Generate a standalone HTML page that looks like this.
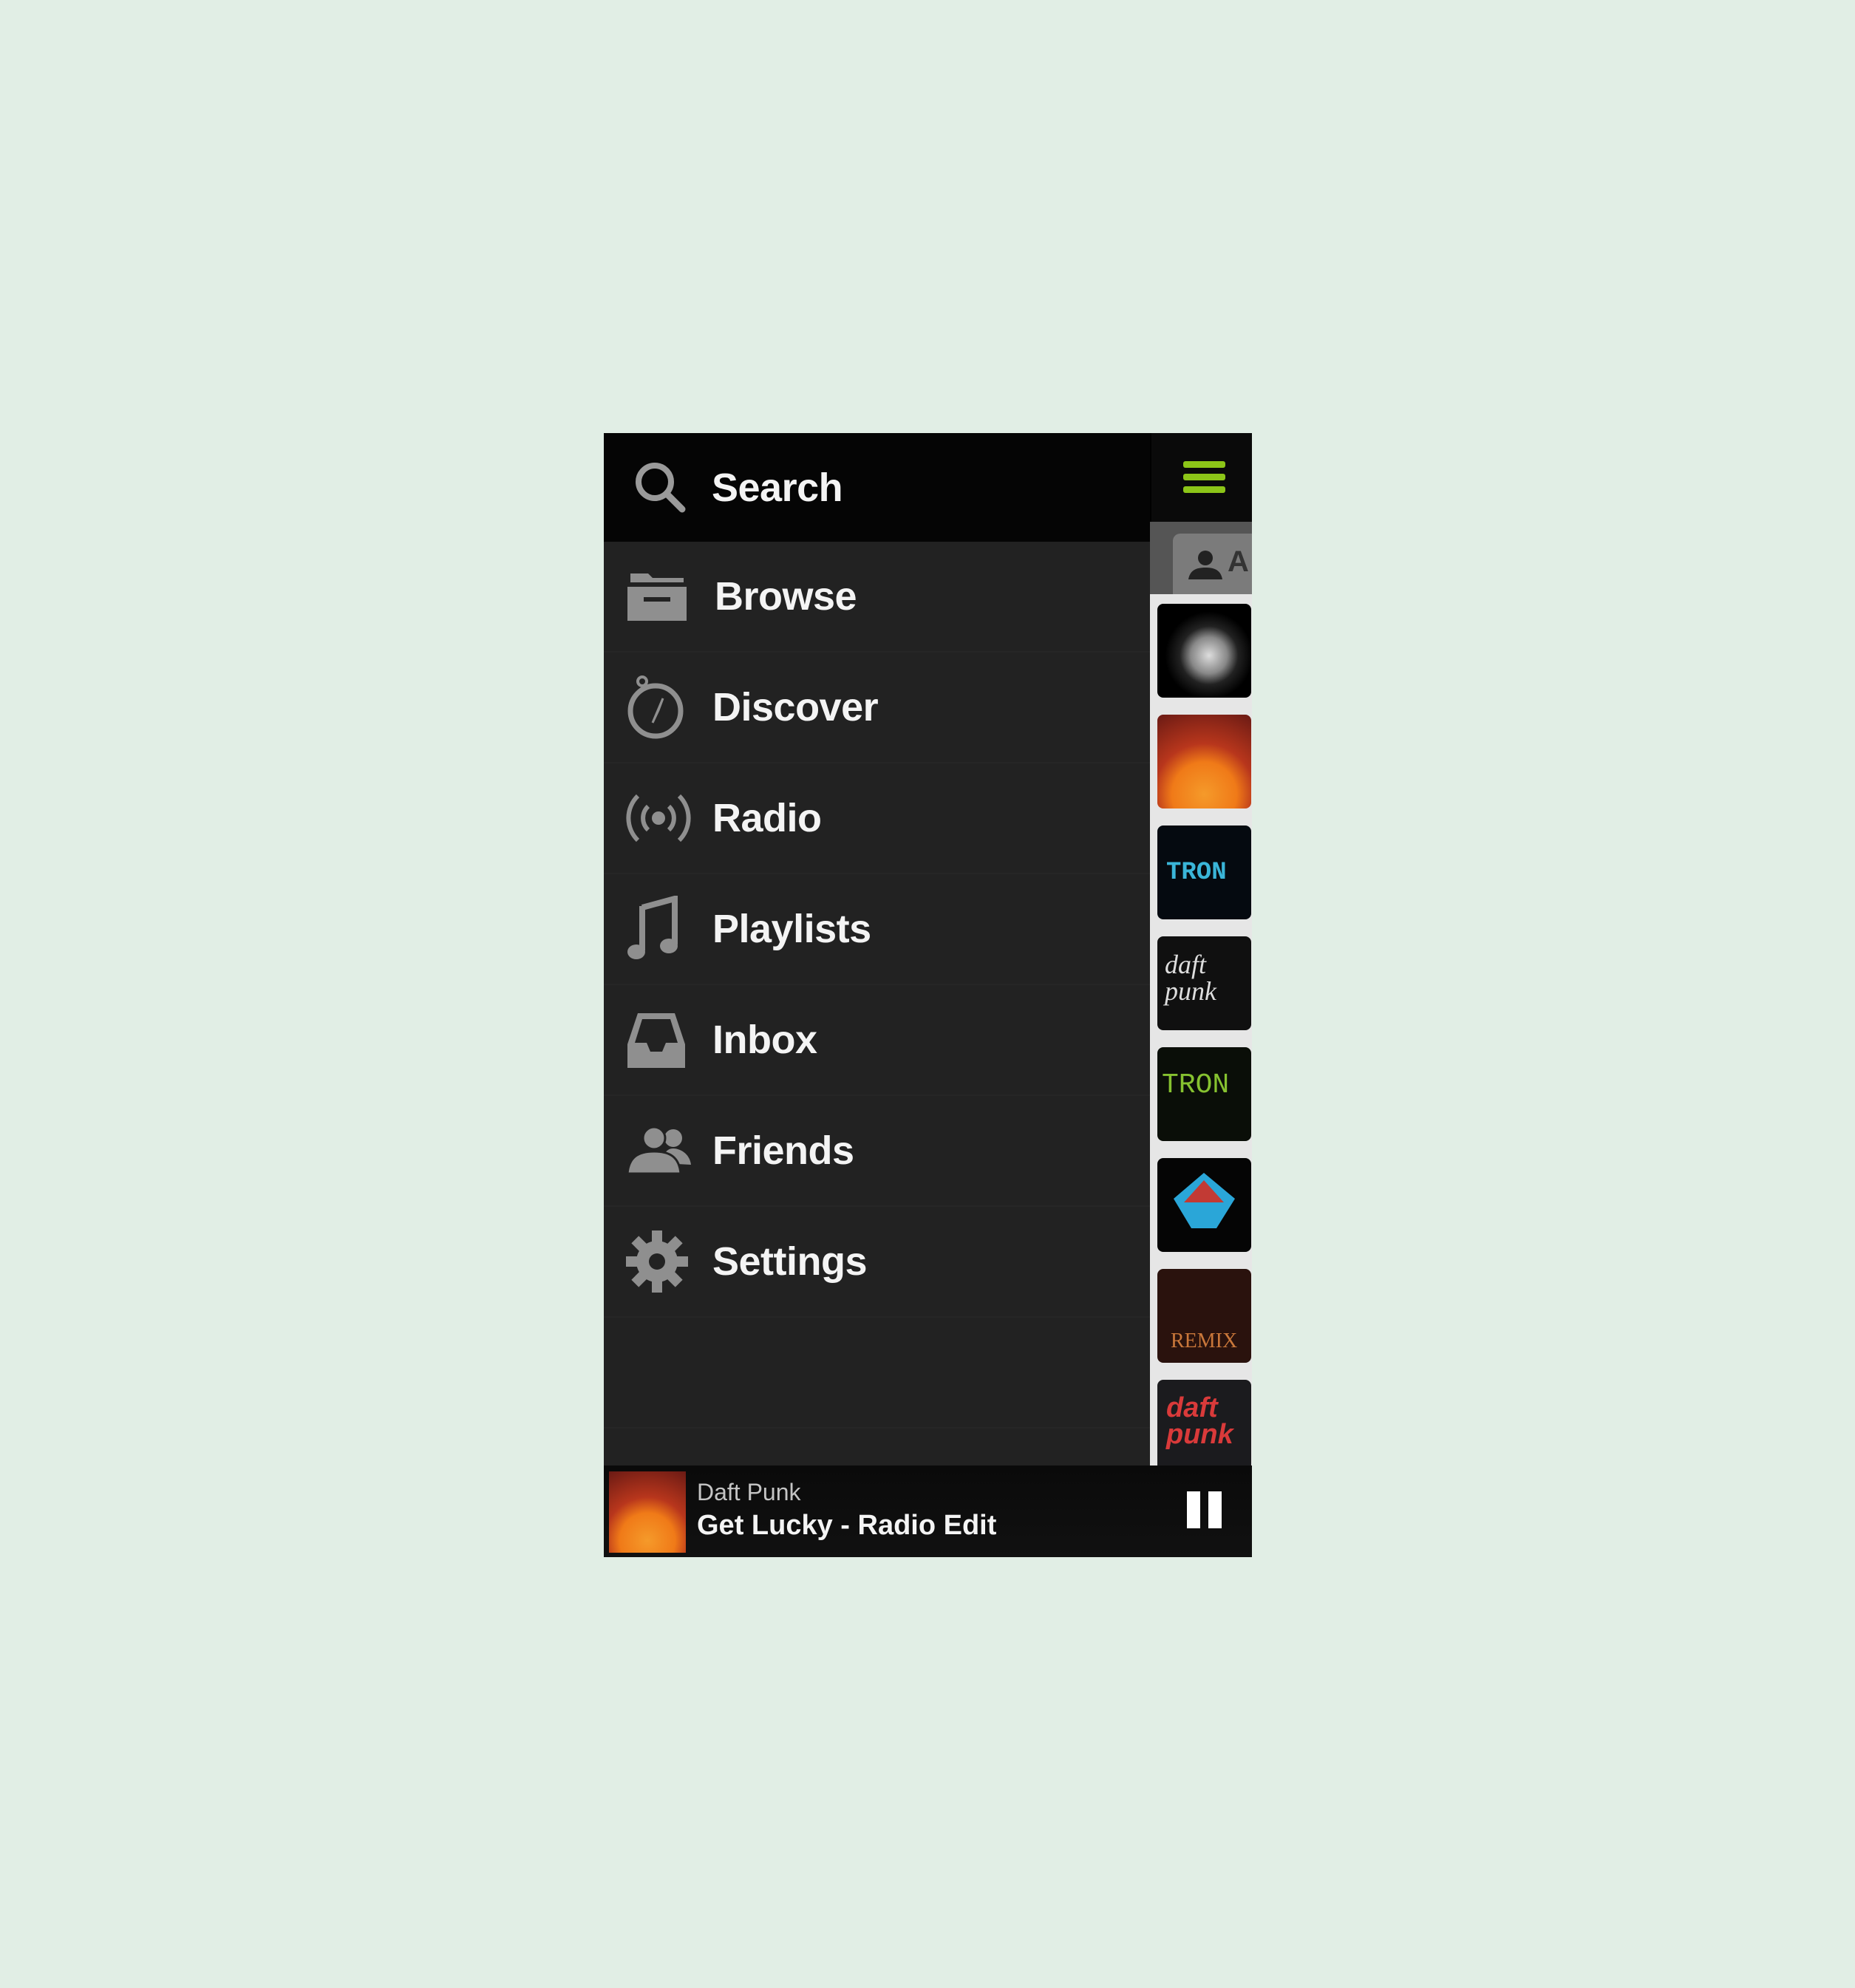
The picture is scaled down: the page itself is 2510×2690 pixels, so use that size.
<!DOCTYPE html>
<html><head><meta charset="utf-8"><style>
*{margin:0;padding:0;box-sizing:border-box}
body{width:2510px;height:2690px;background:#e1eee5;position:relative;overflow:hidden;font-family:"Liberation Sans",Arial,sans-serif}
.abs{position:absolute}
#phone{left:817px;top:586px;width:877px;height:1521px;background:#222;overflow:hidden}
.row{position:absolute;left:0;width:739px;height:150px;border-bottom:2px solid #262626}
.lbl{position:absolute;left:147px;top:50%;transform:translateY(-50%);color:#f4f4f4;font-size:54px;font-weight:bold;letter-spacing:-0.5px}
.ic{position:absolute;left:30px;top:50%;transform:translateY(-50%)}
.thumb{position:absolute;left:10px;width:127px;height:127px;border-radius:8px;overflow:hidden}
</style></head><body>
<div id="phone" class="abs">
  <!-- search bar -->
  <div class="abs" style="left:0;top:0;width:739px;height:147px;background:#050505">
    <svg class="abs" style="left:38px;top:35px" width="76" height="76" viewBox="0 0 76 76"><circle cx="31" cy="31" r="22" fill="none" stroke="#9a9a9a" stroke-width="8"/><line x1="47" y1="47" x2="68" y2="68" stroke="#9a9a9a" stroke-width="9" stroke-linecap="round"/></svg>
    <div class="lbl" style="left:146px">Search</div>
  </div>
  <!-- rows -->
  <div class="row" style="top:147px"><svg class="ic" width="84" height="70" viewBox="0 0 84 70"><path d="M6 4h24l6 6h42v6H6z" fill="#8f8f8f"/><path d="M2 22h80v46H2z" fill="#8f8f8f"/><rect x="24" y="36" width="36" height="6" fill="#222"/></svg><div class="lbl" style="left:150px">Browse</div></div>
  <div class="row" style="top:297px"><svg class="ic" width="80" height="90" viewBox="0 0 80 90"><circle cx="40" cy="50" r="34" fill="none" stroke="#8f8f8f" stroke-width="7"/><circle cx="22" cy="10" r="6" fill="none" stroke="#8f8f8f" stroke-width="4"/><path d="M50 33L36 66 44 49z" fill="#8f8f8f"/><path d="M50 33L44 49 36 66z" stroke="#8f8f8f" stroke-width="3"/></svg><div class="lbl">Discover</div></div>
  <div class="row" style="top:447px"><svg class="ic" width="88" height="76" viewBox="0 0 88 76"><circle cx="44" cy="38" r="9" fill="#8f8f8f"/><path d="M30 22a22 22 0 0 0 0 32M58 22a22 22 0 0 1 0 32" fill="none" stroke="#8f8f8f" stroke-width="6"/><path d="M16 8a42 42 0 0 0 0 60M72 8a42 42 0 0 1 0 60" fill="none" stroke="#8f8f8f" stroke-width="6"/></svg><div class="lbl">Radio</div></div>
  <div class="row" style="top:597px"><svg class="ic" width="72" height="90" viewBox="0 0 72 90"><path d="M22 16L66 4v62" fill="none" stroke="#8f8f8f" stroke-width="8"/><line x1="22" y1="14" x2="22" y2="74" stroke="#8f8f8f" stroke-width="8"/><ellipse cx="14" cy="76" rx="12" ry="10" fill="#8f8f8f"/><ellipse cx="58" cy="68" rx="12" ry="10" fill="#8f8f8f"/></svg><div class="lbl">Playlists</div></div>
  <div class="row" style="top:747px"><svg class="ic" width="82" height="80" viewBox="0 0 82 80"><path d="M16 4h50l14 42v32H2V46z" fill="#8f8f8f"/><path d="M22 12h38l10 32H54l-5 12H33l-5-12H12z" fill="#222"/></svg><div class="lbl">Inbox</div></div>
  <div class="row" style="top:897px"><svg class="ic" width="90" height="70" viewBox="0 0 90 70"><circle cx="64" cy="18" r="12" fill="#8f8f8f"/><path d="M50 52c0-14 6-20 14-20s22 6 24 22z" fill="#8f8f8f"/><circle cx="38" cy="18" r="15" fill="#8f8f8f" stroke="#222" stroke-width="3"/><path d="M2 66c2-22 14-30 36-30s34 8 36 30z" fill="#8f8f8f" stroke="#222" stroke-width="3"/></svg><div class="lbl">Friends</div></div>
  <div class="row" style="top:1047px"><svg class="ic" width="84" height="84" viewBox="0 0 84 84"><g fill="#8f8f8f"><circle cx="42" cy="42" r="28"/><g id="t"><rect x="35" y="0" width="14" height="16"/><rect x="35" y="68" width="14" height="16"/></g><use href="#t" transform="rotate(45 42 42)"/><use href="#t" transform="rotate(90 42 42)"/><use href="#t" transform="rotate(135 42 42)"/></g><circle cx="42" cy="42" r="11" fill="#222"/></svg><div class="lbl">Settings</div></div>
  <div class="row" style="top:1197px"></div>
  <!-- right panel -->
  <div class="abs" style="left:739px;top:0;width:138px;height:120px;background:#0a0a0a;border-left:2px solid #000">
    <div class="abs" style="left:43px;top:38px;width:57px;height:9px;background:#8cc518;border-radius:3px"></div>
    <div class="abs" style="left:43px;top:55px;width:57px;height:9px;background:#8cc518;border-radius:3px"></div>
    <div class="abs" style="left:43px;top:72px;width:57px;height:9px;background:#8cc518;border-radius:3px"></div>
  </div>
  <div class="abs" style="left:739px;top:120px;width:138px;height:98px;background:#555">
    <div class="abs" style="left:31px;top:16px;width:120px;height:82px;background:#7b7b7b;border-radius:10px 10px 0 0"></div>
    <svg class="abs" style="left:50px;top:38px" width="50" height="42" viewBox="0 0 50 42"><circle cx="25" cy="11" r="10" fill="#222"/><path d="M2 40c2-12 10-16 23-16s21 4 23 16z" fill="#222"/></svg>
    <div class="abs" style="left:105px;top:32px;color:#333;font-size:40px;font-weight:bold">A</div>
  </div>
  <div class="abs" style="left:739px;top:218px;width:138px;height:1180px;background:#e6e6e6">
    <div class="thumb" style="top:13px;background:radial-gradient(circle at 55% 55%,#ddd 0,#888 25%,#222 40%,#000 60%)"></div>
    <div class="thumb" style="top:163px;background:radial-gradient(circle at 50% 85%,#f59a2a 0,#f07a18 35%,#b8361c 55%,#6a1a14 100%)"></div>
    <div class="thumb" style="top:313px;background:#050a10"><div class="abs" style="left:12px;top:45px;color:#3ab5d8;font-weight:bold;font-size:34px;font-family:'Liberation Mono',monospace">TRON</div></div>
    <div class="thumb" style="top:463px;background:#101010"><div class="abs" style="left:10px;top:20px;color:#ddd;font-style:italic;font-size:36px;font-family:'Liberation Serif',serif;line-height:36px">daft<br>punk</div></div>
    <div class="thumb" style="top:613px;background:#0a0e08"><div class="abs" style="left:6px;top:30px;color:#86c230;font-size:38px;font-family:'Liberation Mono',monospace">TRON</div></div>
    <div class="thumb" style="top:763px;background:#050505"><svg width="127" height="127"><path d="M63 20L105 55 80 95H46L22 55z" fill="#2aa6d8"/><path d="M63 30L90 60H36z" fill="#c23a34"/></svg></div>
    <div class="thumb" style="top:913px;background:#2a120d"><div class="abs" style="left:18px;top:82px;color:#c9773a;font-size:28px;font-family:'Liberation Serif',serif">REMIX</div></div>
    <div class="thumb" style="top:1063px;background:#1b1b1e"><div class="abs" style="left:12px;top:20px;color:#d93a3a;font-style:italic;font-weight:bold;font-size:38px;line-height:36px">daft<br>punk</div></div>
  </div>
  <!-- bottom bar -->
  <div class="abs" style="left:0;top:1397px;width:877px;height:124px;background:linear-gradient(#0a0a0a,#111)">
    <div class="abs" style="left:7px;top:8px;width:104px;height:110px;background:radial-gradient(circle at 50% 85%,#f59a2a 0,#f07a18 35%,#b8361c 55%,#6a1a14 100%)"></div>
    <div class="abs" style="left:126px;top:18px;color:#c4c4c4;font-size:32px">Daft Punk</div>
    <div class="abs" style="left:126px;top:60px;color:#f4f4f4;font-size:38px;font-weight:bold">Get Lucky - Radio Edit</div>
    <div class="abs" style="left:789px;top:35px;width:18px;height:50px;background:#fff"></div>
    <div class="abs" style="left:818px;top:35px;width:18px;height:50px;background:#fff"></div>
  </div>
</div>
</body></html>
